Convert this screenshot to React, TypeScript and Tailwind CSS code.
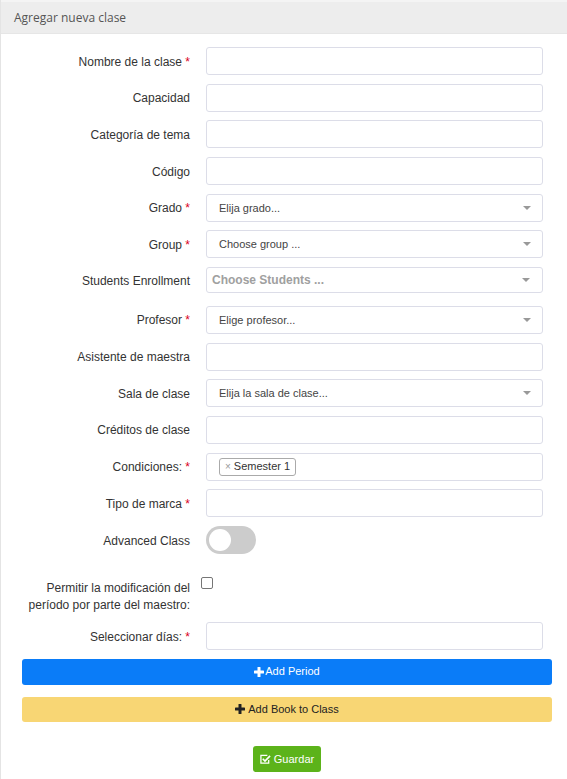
import React from 'react';

type Field = {
  label: string;
  required?: boolean;
  kind: 'text' | 'select' | 'multi' | 'tags';
  placeholder?: string;
};

const fields: Field[] = [
  { label: 'Nombre de la clase', required: true, kind: 'text' },
  { label: 'Capacidad', kind: 'text' },
  { label: 'Categoría de tema', kind: 'text' },
  { label: 'Código', kind: 'text' },
  { label: 'Grado', required: true, kind: 'select', placeholder: 'Elija grado...' },
  { label: 'Group', required: true, kind: 'select', placeholder: 'Choose group ...' },
  { label: 'Students Enrollment', kind: 'multi', placeholder: 'Choose Students ...' },
  { label: 'Profesor', required: true, kind: 'select', placeholder: 'Elige profesor...' },
  { label: 'Asistente de maestra', kind: 'text' },
  { label: 'Sala de clase', kind: 'select', placeholder: 'Elija la sala de clase...' },
  { label: 'Créditos de clase', kind: 'text' },
  { label: 'Condiciones:', required: true, kind: 'tags' },
  { label: 'Tipo de marca', required: true, kind: 'text' },
];

function Arrow() {
  return (
    <svg width="8" height="4" viewBox="0 0 8 4" className="shrink-0">
      <path d="M0 0h8L4 4z" fill="#999" />
    </svg>
  );
}

function PlusIcon({ color }: { color: string }) {
  return (
    <svg width="10" height="10" viewBox="0 0 10 10" className="mr-[1px]">
      <rect x="3.5" y="0" width="3" height="10" rx="0.6" fill={color} />
      <rect x="0" y="3.5" width="10" height="3" rx="0.6" fill={color} />
    </svg>
  );
}

function CheckSquareIcon() {
  return (
    <svg width="11" height="11" viewBox="0 0 12 12" className="mr-[3px]">
      <path d="M9.5 6.5v3.5h-8.5v-8.5h7" fill="none" stroke="#fff" strokeWidth="1.4" />
      <path d="M3 5.2l2.4 2.4 5.6-5.6" fill="none" stroke="#fff" strokeWidth="1.8" />
    </svg>
  );
}

function Label({ text, required }: { text: string; required?: boolean }) {
  return (
    <div className="w-[168px] shrink-0 text-right text-[12px] leading-[17px] text-[#333]">
      {text}
      {required && <span className="text-[#d9001b]"> *</span>}
    </div>
  );
}

function Control({ f }: { f: Field }) {
  const base = 'ml-[16px] w-[337px] bg-white border border-[#dcdde8] rounded-[3px] flex items-center';
  if (f.kind === 'select') {
    return (
      <div className={`${base} h-[28px] pl-[12px] pr-[11px] justify-between`}>
        <span className="text-[11px] text-[#444]">{f.placeholder}</span>
        <Arrow />
      </div>
    );
  }
  if (f.kind === 'multi') {
    return (
      <div className={`${base} h-[26px] pl-[5px] pr-[12px] justify-between`}>
        <span className="text-[12px] text-[#a0a0a0] font-bold">{f.placeholder}</span>
        <Arrow />
      </div>
    );
  }
  if (f.kind === 'tags') {
    return (
      <div className={`${base} h-[28px] pl-[12px] items-start pt-[4px]`}>
        <span className="inline-flex items-center h-[18px] px-[5px] border border-[#aaa] rounded-[3px] bg-white text-[11px] text-[#333]">
          <span className="text-[#999] mr-[3px] text-[10px]">×</span>Semester 1
        </span>
      </div>
    );
  }
  return <div className={`${base} h-[28px]`} />;
}

export default function App() {
  return (
    <div className="min-h-screen bg-white border-l border-[#e4e4e4] font-[family-name:Liberation_Sans,Arial,sans-serif]">
      <div className="h-[34px] bg-[#ededed] border-t-2 border-[#f4f4f4] border-b border-b-[#e6e6e6] flex items-center px-[13px] font-[family-name:Open_Sans,sans-serif] text-[12px] text-[#555]">
        Agregar nueva clase
      </div>

      <div className="pl-[21px] pr-[15px] pt-[13px] pb-[10px]">
        {fields.map((f) => (
          <div
            key={f.label}
            className={`flex items-center ${f.kind === 'multi' ? 'h-[28px] items-start mb-[10.8px]' : 'mb-[8.7px]'}`}
          >
            <div className={f.kind === 'multi' ? 'pt-[6px]' : 'pt-[2px]'}>
              <Label text={f.label} required={f.required} />
            </div>
            <Control f={f} />
          </div>
        ))}

        <div className="flex items-center mb-[17.5px]">
          <div className="pt-[2px]">
            <Label text="Advanced Class" />
          </div>
          <div className="ml-[16px] relative w-[50px] h-[28px] rounded-full bg-[#cccccc]">
            <div className="absolute left-[3px] top-[3px] w-[22px] h-[22px] rounded-full bg-white" />
          </div>
        </div>

        <div className="flex items-start mb-[8.7px]">
          <div className="pt-[8px]">
            <Label text="Permitir la modificación del período por parte del maestro:" />
          </div>
          <span className="ml-[11px] mt-[5px] w-[12px] h-[12px] border border-[#767676] rounded-[2px] bg-white" />
        </div>

        <div className="flex items-center mb-[8.5px]">
          <div className="pt-[2px]">
            <Label text="Seleccionar días:" required />
          </div>
          <div className="ml-[16px] w-[337px] h-[28px] bg-white border border-[#dcdde8] rounded-[3px]" />
        </div>

        <div className="h-[26px] bg-[#0a7cf8] rounded-[3px] flex items-center justify-center text-white text-[11px] mb-[12px]">
          <PlusIcon color="#fff" />
          Add Period
        </div>

        <div className="h-[25px] bg-[#f8d674] rounded-[3px] flex items-center justify-center text-[#222] text-[11px] mb-[24.5px]">
          <PlusIcon color="#222" />
          <span className="ml-[2px]">Add Book to Class</span>
        </div>

        <div className="flex justify-center">
          <div className="h-[26px] px-[7px] bg-[#5cb31a] rounded-[3px] flex items-center text-white text-[11px]">
            <CheckSquareIcon />
            Guardar
          </div>
        </div>
      </div>
    </div>
  );
}
